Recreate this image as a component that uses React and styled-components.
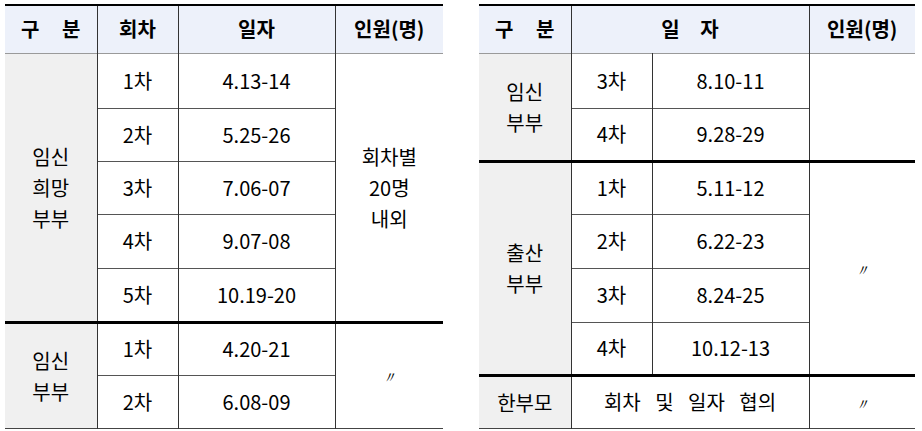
import React from "react";
import styled, { createGlobalStyle } from "styled-components";

const GlobalStyle = createGlobalStyle`
  html, body {
    margin: 0;
    padding: 0;
    background: #ffffff;
  }
  body {
    font-family: "Noto Sans CJK KR", "Noto Sans", sans-serif;
    color: #000;
  }
`;

const Page = styled.div`
  display: flex;
  gap: 36px;
  padding: 4px 0 0 5px;
`;

const Table = styled.table`
  border-collapse: collapse;
  table-layout: fixed;
  width: ${p => p.$width}px;
  font-size: 20px;
  line-height: 1.2;
`;

const HeadRow = styled.tr`
  height: 48px;
  border-top: 2px solid #000;
  border-bottom: 1px solid #9a9a9a;
`;

const Row = styled.tr`
  height: ${p => p.$h || 53}px;
  border-top: ${p => (p.$thick ? "3px solid #000" : "1px solid #555")};
  border-bottom: ${p => (p.$last ? "1px solid #444" : "none")};
`;

const Th = styled.th`
  background: #edf1fa;
  font-weight: 700;
  font-size: 20px;
  text-align: center;
  padding: 0;
  border-left: ${p => (p.$first ? "none" : "1px solid #333")};
  word-spacing: ${p => p.$spread || 0}px;
`;

const Group = styled.td`
  background: #f0f0f0;
  text-align: center;
  vertical-align: middle;
  line-height: 31px;
  padding: 0;
`;

const Td = styled.td`
  text-align: center;
  vertical-align: middle;
  padding: 0;
  border-left: 1px solid #333;
  line-height: ${p => p.$lh || "1.2"};
  word-spacing: ${p => p.$spread || 0}px;
`;

const Ditto = styled.span`
  font-size: 16px;
  font-style: italic;
  font-family: "DejaVu Sans", sans-serif;
`;

const Lines = ({ items }) =>
  items.map((t, i) => (
    <React.Fragment key={i}>
      {i > 0 && <br />}
      {t}
    </React.Fragment>
  ));

export default function App() {
  return (
    <>
      <GlobalStyle />
      <Page>
        <Table $width={438}>
          <colgroup>
            <col style={{ width: 92 }} />
            <col style={{ width: 81 }} />
            <col style={{ width: 157 }} />
            <col style={{ width: 108 }} />
          </colgroup>
          <thead>
            <HeadRow>
              <Th $first $spread={18}>구 분</Th>
              <Th>회차</Th>
              <Th>일자</Th>
              <Th>인원(명)</Th>
            </HeadRow>
          </thead>
          <tbody>
            <Row $h={55}>
              <Group rowSpan={5}>
                <Lines items={["임신", "희망", "부부"]} />
              </Group>
              <Td>1차</Td>
              <Td>4.13-14</Td>
              <Td rowSpan={5} $lh="31px">
                <Lines items={["회차별", "20명", "내외"]} />
              </Td>
            </Row>
            <Row>
              <Td>2차</Td>
              <Td>5.25-26</Td>
            </Row>
            <Row>
              <Td>3차</Td>
              <Td>7.06-07</Td>
            </Row>
            <Row $h={54}>
              <Td>4차</Td>
              <Td>9.07-08</Td>
            </Row>
            <Row $h={54}>
              <Td>5차</Td>
              <Td>10.19-20</Td>
            </Row>
            <Row $thick>
              <Group rowSpan={2}>
                <Lines items={["임신", "부부"]} />
              </Group>
              <Td>1차</Td>
              <Td>4.20-21</Td>
              <Td rowSpan={2}>
                <Ditto>〃</Ditto>
              </Td>
            </Row>
            <Row $last>
              <Td>2차</Td>
              <Td>6.08-09</Td>
            </Row>
          </tbody>
        </Table>

        <Table $width={436}>
          <colgroup>
            <col style={{ width: 92 }} />
            <col style={{ width: 81 }} />
            <col style={{ width: 157 }} />
            <col style={{ width: 106 }} />
          </colgroup>
          <thead>
            <HeadRow>
              <Th $first $spread={18}>구 분</Th>
              <Th colSpan={2} $spread={16}>일 자</Th>
              <Th>인원(명)</Th>
            </HeadRow>
          </thead>
          <tbody>
            <Row $h={55}>
              <Group rowSpan={2}>
                <Lines items={["임신", "부부"]} />
              </Group>
              <Td>3차</Td>
              <Td>8.10-11</Td>
              <Td rowSpan={2} />
            </Row>
            <Row>
              <Td>4차</Td>
              <Td>9.28-29</Td>
            </Row>
            <Row $thick>
              <Group rowSpan={4}>
                <Lines items={["출산", "부부"]} />
              </Group>
              <Td>1차</Td>
              <Td>5.11-12</Td>
              <Td rowSpan={4}>
                <Ditto>〃</Ditto>
              </Td>
            </Row>
            <Row $h={54}>
              <Td>2차</Td>
              <Td>6.22-23</Td>
            </Row>
            <Row $h={54}>
              <Td>3차</Td>
              <Td>8.24-25</Td>
            </Row>
            <Row>
              <Td>4차</Td>
              <Td>10.12-13</Td>
            </Row>
            <Row $thick $last>
              <Group>한부모</Group>
              <Td colSpan={2} $spread={10}>회차 및 일자 협의</Td>
              <Td>
                <Ditto>〃</Ditto>
              </Td>
            </Row>
          </tbody>
        </Table>
      </Page>
    </>
  );
}
